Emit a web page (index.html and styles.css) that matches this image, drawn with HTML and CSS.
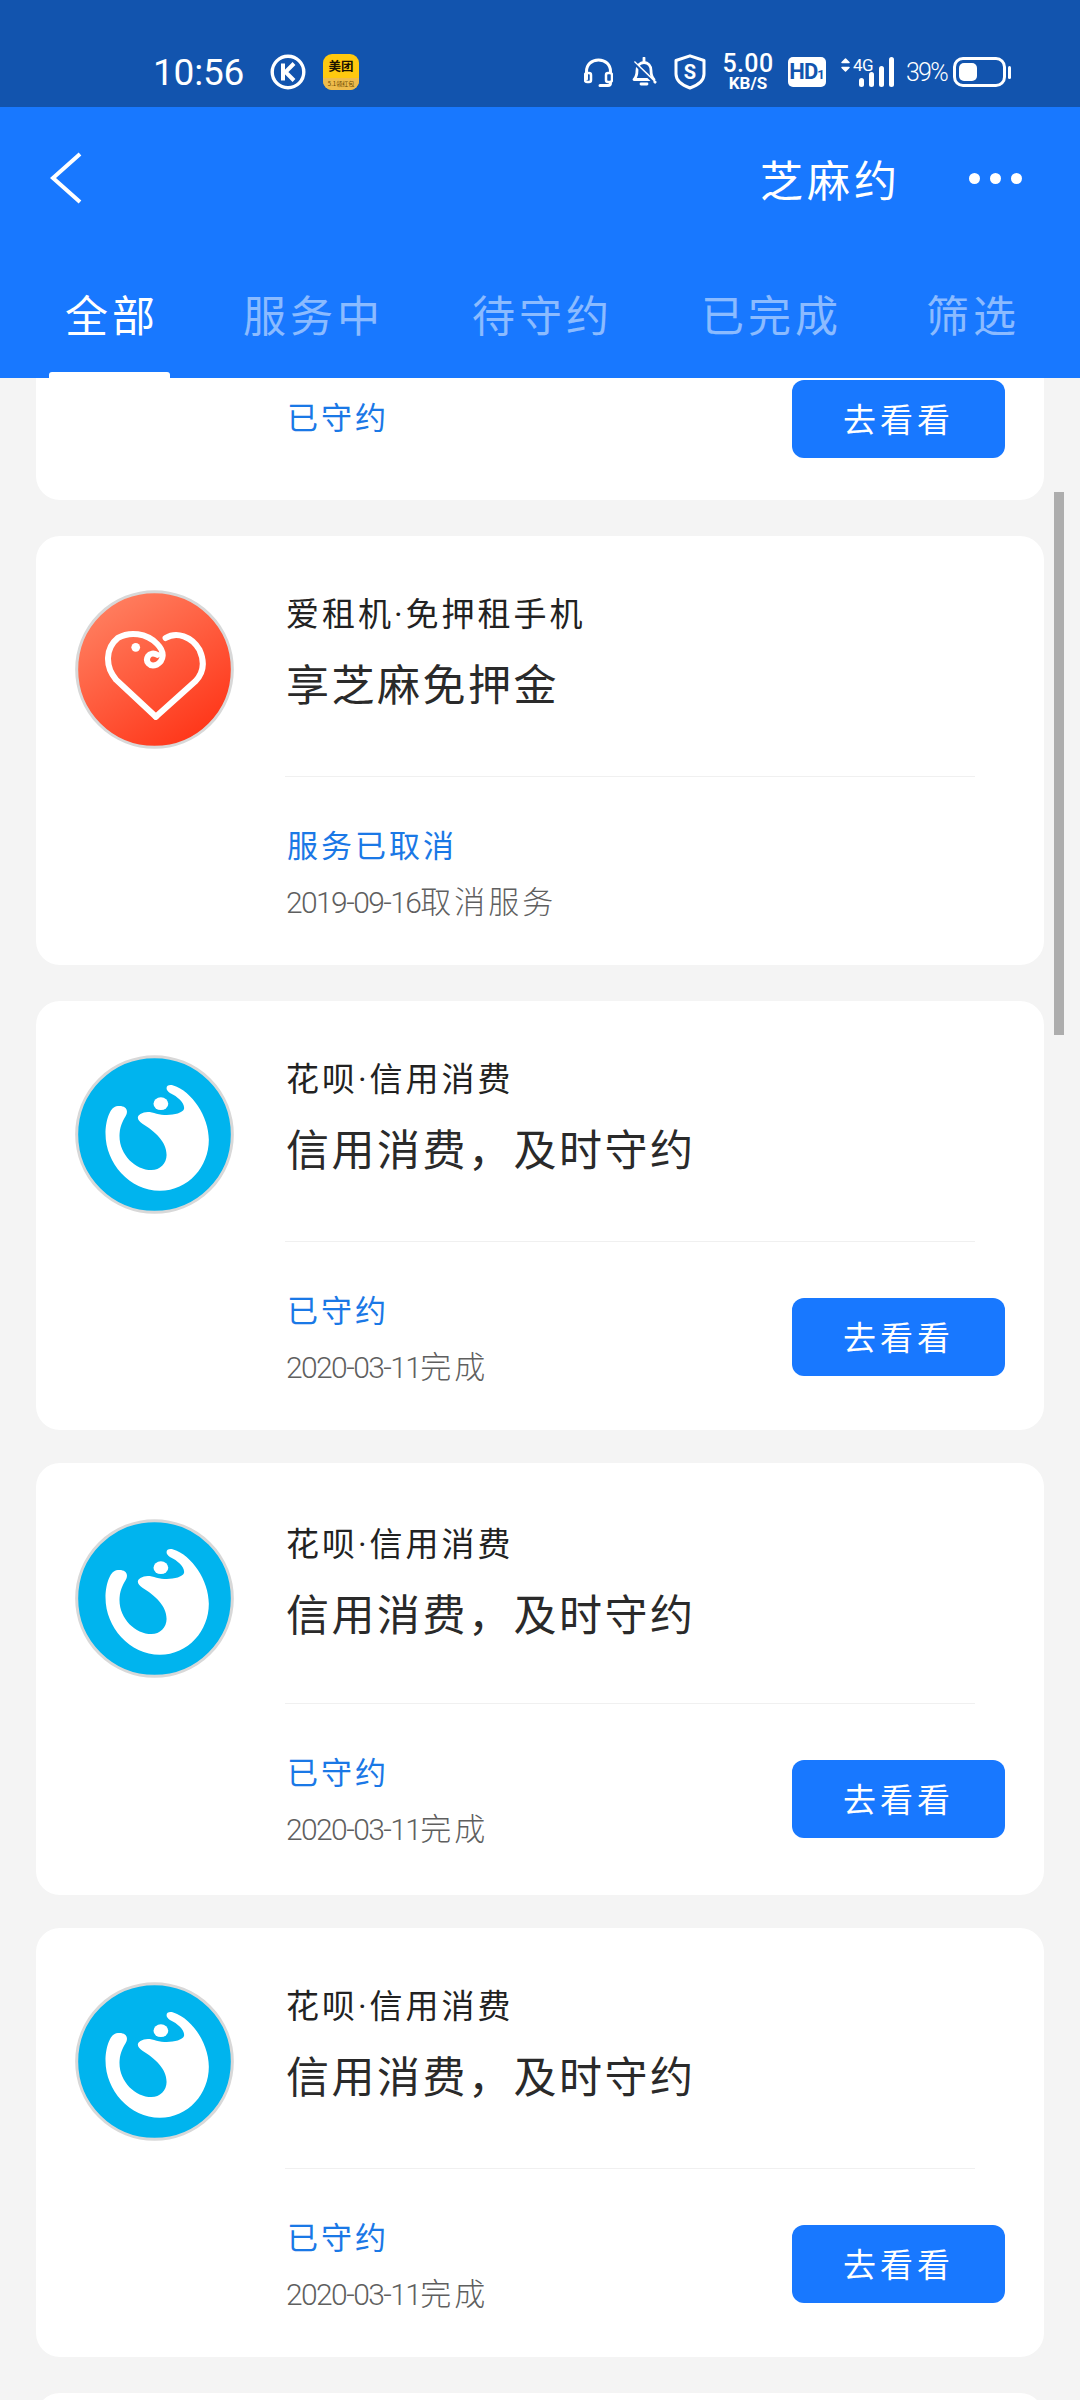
FILE: index.html
```html
<!DOCTYPE html>
<html lang="zh-CN">
<head>
<meta charset="utf-8">
<title>芝麻约</title>
<link rel="stylesheet" href="styles.css">
</head>
<body>
<svg class="defs" width="0" height="0" aria-hidden="true">
  <defs>
    <linearGradient id="heart-bg" x1="0.2" y1="0.05" x2="0.8" y2="0.95">
      <stop offset="0" stop-color="#ff7f60"/>
      <stop offset="1" stop-color="#ff3518"/>
    </linearGradient>
    <symbol id="logo-heart" viewBox="27 27 474 474">
      <circle cx="264" cy="264" r="232" fill="url(#heart-bg)" stroke="#d8d8d8" stroke-width="9"/>
      <g class="soft" fill="none" stroke="#fff" stroke-width="18" stroke-linecap="round" stroke-linejoin="round">
        <path d="M268 405L150 295C115 255 118 200 155 170C190 150 240 155 272 188C296 212 292 238 270 250C250 258 235 240 245 224C250 216 262 214 272 220"/>
        <path d="M297 170C330 150 375 165 398 205C418 250 405 280 385 300L268 405"/>
      </g>
      <circle class="soft" cx="208" cy="198" r="13" fill="#fff"/>
    </symbol>
    <symbol id="logo-drop" viewBox="27 27 474 474">
      <circle cx="264" cy="264" r="232" fill="#00b4ee" stroke="#d8d8d8" stroke-width="9"/>
      <path class="soft" fill="#fff" d="M150 180C130 185 118 225 118 262C118 350 190 432 280 432C365 432 426 360 426 280C426 210 375 135 320 118C300 112 292 128 310 140C335 152 355 170 352 188C345 205 300 210 270 202C250 195 235 195 222 203C208 212 215 222 228 232C265 255 300 285 300 325C300 350 280 370 255 370C205 370 155 320 160 260C162 235 172 220 180 205C188 185 170 175 150 180Z"/>
      <ellipse class="soft" cx="283" cy="172" rx="22" ry="19" fill="#fff"/>
    </symbol>
  </defs>
</svg>

<div class="phone">
  <header class="status">
    <span class="clock">10:56</span>
    <svg class="ic-k" viewBox="0 0 36 36"><circle cx="18" cy="18" r="15.8" fill="none" stroke="#fff" stroke-width="3.4"/><path d="M13 9.5v17M24 9.5L15.5 18L24 26.5" fill="none" stroke="#fff" stroke-width="4"/></svg>
    <div class="mt"><span class="mt-name">美团</span><span class="mt-sub">5.1领红包</span></div>
    <div class="status-right">
      <svg class="ic-head" viewBox="0 0 29 29"><path d="M2.5 21V13.5C2.5 6.5 7.5 2 14.5 2S26.5 6.5 26.5 13.5V25C26.5 26.5 25.5 27.5 24 27.5H16" fill="none" stroke="#fff" stroke-width="3" stroke-linecap="round"/><rect x="1" y="15" width="6" height="9" rx="2" fill="none" stroke="#fff" stroke-width="2.5"/><rect x="22" y="15" width="6" height="9" rx="2" fill="#1254ae" stroke="#fff" stroke-width="2.5"/></svg>
      <svg class="ic-bell" viewBox="0 0 26 30"><path d="M3 22.5C5.5 20 6 18 6 13.5C6 8.5 9 5.5 13 5.5S20 8.5 20 13.5C20 18 20.5 20 23 22.5H3Z" fill="none" stroke="#fff" stroke-width="2.8" stroke-linejoin="round"/><path d="M13 1v4M10 27h6" stroke="#fff" stroke-width="2.8" stroke-linecap="round"/><path d="M3 5L25 26" stroke="#fff" stroke-width="2.5"/><path d="M0 3.5L22 25" stroke="#1254ae" stroke-width="2"/></svg>
      <svg class="ic-shield" viewBox="0 0 32 36"><path d="M16 1.8L30 6.5V20C30 27 23 31.5 16 34C9 31.5 2 27 2 20V6.5Z" fill="none" stroke="#fff" stroke-width="3" stroke-linejoin="round"/><text class="shield-s" x="16" y="25" text-anchor="middle">S</text></svg>
      <div class="speed"><span class="speed-n">5.00</span><span class="speed-u">KB/S</span></div>
      <div class="hd">HD<span class="hd-n">1</span></div>
      <svg class="ic-arrows" viewBox="0 0 9 16"><path d="M1 5.5L4.5 2L8 5.5ZM1 10.5L4.5 14L8 10.5Z" fill="#fff" stroke="#fff" stroke-width="1.5" stroke-linejoin="round"/></svg>
      <div class="net">
        <span class="net-g">4G</span>
        <div class="bars"><i class="b1"></i><i class="b2"></i><i class="b3"></i><i class="b4"></i></div>
      </div>
      <span class="batt-p">39%</span>
      <div class="batt"><div class="batt-fill"></div></div>
      <div class="batt-nub"></div>
    </div>
  </header>

  <section class="appbar">
    <div class="navrow">
      <svg class="back" viewBox="0 0 32 52"><path d="M30 2L3 26L30 50" fill="none" stroke="#fff" stroke-width="4"/></svg>
      <h1 class="title">芝麻约</h1>
      <div class="more"><i></i><i></i><i></i></div>
    </div>
    <nav class="tabs">
      <span class="tab tab--on">全部</span>
      <span class="tab">服务中</span>
      <span class="tab">待守约</span>
      <span class="tab">已完成</span>
      <span class="tab tab--last">筛选</span>
    </nav>
  </section>

  <main class="list">
    <div class="scrollbar"></div>

    <article class="card card--cut">
      <div class="foot">
        <div class="meta"><div class="state">已守约</div></div>
        <button class="go">去看看</button>
      </div>
    </article>

    <article class="card">
      <svg class="logo"><use href="#logo-heart"/></svg>
      <div class="body">
        <div class="name">爱租机·免押租手机</div>
        <div class="head">享芝麻免押金</div>
        <div class="rule"></div>
        <div class="foot">
          <div class="meta"><div class="state">服务已取消</div><div class="date"><span class="num">2019-09-16</span>取消服务</div></div>
        </div>
      </div>
    </article>

    <article class="card">
      <svg class="logo"><use href="#logo-drop"/></svg>
      <div class="body">
        <div class="name">花呗·信用消费</div>
        <div class="head">信用消费，及时守约</div>
        <div class="rule"></div>
        <div class="foot">
          <div class="meta"><div class="state">已守约</div><div class="date"><span class="num">2020-03-11</span>完成</div></div>
          <button class="go">去看看</button>
        </div>
      </div>
    </article>

    <article class="card card--tall">
      <svg class="logo"><use href="#logo-drop"/></svg>
      <div class="body">
        <div class="name">花呗·信用消费</div>
        <div class="head">信用消费，及时守约</div>
        <div class="rule"></div>
        <div class="foot">
          <div class="meta"><div class="state">已守约</div><div class="date"><span class="num">2020-03-11</span>完成</div></div>
          <button class="go">去看看</button>
        </div>
      </div>
    </article>

    <article class="card card--tight">
      <svg class="logo"><use href="#logo-drop"/></svg>
      <div class="body">
        <div class="name">花呗·信用消费</div>
        <div class="head">信用消费，及时守约</div>
        <div class="rule"></div>
        <div class="foot">
          <div class="meta"><div class="state">已守约</div><div class="date"><span class="num">2020-03-11</span>完成</div></div>
          <button class="go">去看看</button>
        </div>
      </div>
    </article>

    <article class="card card--peek"></article>
  </main>
</div>
</body>
</html>
```

FILE: styles.css
```css
* { box-sizing: border-box; }
html, body { margin: 0; padding: 0; }
body { width: 1080px; height: 2400px; overflow: hidden; background: #f4f4f4; font-family: "Noto Sans CJK SC", "Noto Sans", sans-serif; }
.defs { position: absolute; }
.soft { filter: blur(1.5px); }
.phone { width: 1080px; height: 2400px; display: flex; flex-direction: column; overflow: hidden; }

/* status bar */
.status { height: 107px; flex: none; background: #1254ae; color: #fff; display: flex; align-items: center; padding: 37px 0 0 153px; position: relative; }
.clock { font: 400 37px/1 Roboto, sans-serif; width: 89px; letter-spacing: -.2px; }
.ic-k { width: 36px; height: 36px; margin-left: 28px; }
.mt { width: 36px; height: 36px; margin-left: 17px; border-radius: 9px; background: #ffc90f; display: flex; flex-direction: column; align-items: center; overflow: hidden; }
.mt-name { font: 700 12.5px/24px "Noto Sans CJK SC", sans-serif; color: #1a1200; height: 24px; }
.mt-sub { font: 400 6px/12px "Noto Sans CJK SC", sans-serif; color: #6a4a00; background: #efbc4c; width: 100%; height: 12px; text-align: center; white-space: nowrap; }
.status-right { margin-left: 225px; display: flex; align-items: center; height: 36px; }
.ic-head { width: 29px; height: 29px; flex: none; }
.ic-bell { width: 26px; height: 30px; margin-left: 18px; flex: none; }
.ic-shield { width: 32px; height: 36px; margin-left: 17px; flex: none; }
.speed { width: 52px; margin-left: 16px; display: flex; flex-direction: column; align-items: center; font-family: Roboto, sans-serif; flex: none; }
.speed-n { font-size: 25px; line-height: 22px; font-weight: 500; letter-spacing: .4px; }
.speed-u { font-size: 17px; line-height: 17px; font-weight: 700; }
.hd { width: 38px; height: 30px; margin-left: 14px; background: #fff; color: #1254ae; border-radius: 5px; font: 700 22px/30px Roboto, sans-serif; text-align: center; letter-spacing: -1px; flex: none; white-space: nowrap; }
.hd-n { font-size: 13px; letter-spacing: 0; }
.shield-s { font: 700 20px Roboto, sans-serif; fill: #fff; }
.ic-arrows { width: 9px; height: 16px; margin: -14px 0 0 15px; flex: none; }
.net { width: 44px; height: 30px; margin-left: 3px; position: relative; flex: none; }
.net-g { position: absolute; left: 0; top: 0; font: 400 17px/16px Roboto, sans-serif; letter-spacing: -.5px; }
.bars { position: absolute; left: 6px; bottom: 0; display: flex; align-items: flex-end; gap: 5px; }
.bars i { display: block; width: 5px; background: #fff; border-radius: 2.5px; }
.bars .b1 { height: 9px; }
.bars .b2 { height: 15px; }
.bars .b3 { height: 21px; }
.bars .b4 { height: 30px; }
.batt-p { font: 300 25px/1 Roboto, sans-serif; width: 40px; margin-left: 9px; letter-spacing: -1.8px; flex: none; }
.batt { width: 53px; height: 30px; margin-left: 7px; border: 3px solid #fff; border-radius: 10px; padding: 3px; flex: none; }
.batt-fill { width: 18px; height: 18px; background: #fff; border-radius: 5px; }
.batt-nub { width: 3px; height: 13px; margin-left: 2px; background: #fff; border-radius: 2px; flex: none; }

/* app bar */
.appbar { height: 271px; flex: none; background: #1878ff; color: #fff; position: relative; z-index: 2; }
.navrow { height: 178px; padding: 0 58px 0 50px; display: flex; align-items: flex-start; }
.back { width: 32px; height: 52px; margin-top: 45px; flex: none; }
.title { margin: 43px 0 0 auto; font-size: 43px; line-height: 56px; font-weight: 400; letter-spacing: 4px; }
.more { display: flex; gap: 10px; margin: 66px 0 0 68px; }
.more i { display: block; width: 11px; height: 11px; border-radius: 50%; background: #fff; }
.tabs { display: flex; gap: 88px; padding-left: 65px; }
.tab { position: relative; font-size: 43px; line-height: 56px; letter-spacing: 4px; color: rgba(255,255,255,.5); white-space: nowrap; }
.tab--on { color: #fff; margin-right: -4px; }
.tab--last { margin-left: -4px; }
.tab--on::after { content: ""; position: absolute; left: -16px; right: -11px; top: 87px; height: 6px; background: #fff; border-radius: 3px 3px 0 0; }

/* list */
.list { flex: 1; position: relative; padding: 0 36px; display: flex; flex-direction: column; gap: 36px; min-height: 0; }
.scrollbar { position: absolute; left: 1054px; top: 114px; width: 10px; height: 543px; background: #adadad; }
.card { flex: none; background: #fff; border-radius: 24px; height: 429px; padding: 54px 39px 0 39px; display: flex; align-items: flex-start; gap: 52px; }
.card--tall { height: 432px; margin-top: -3px; padding-top: 56px; }
.card--tall .body { margin-top: -53px; }
.card--tall .rule { margin-top: 61px; }
.card--tight { margin-top: -3px; }
.card--cut { height: 122px; border-radius: 0 0 24px 24px; padding: 0 39px 0 250px; display: block; }
.card--cut .foot { height: 122px; }
.card--cut .meta { padding-top: 18px; }
.card--cut .go { margin-top: 2px; }
.card--peek { height: 40px; }
.logo { width: 159px; height: 159px; flex: none; display: block; }
.body { flex: 1; min-width: 0; margin-top: -54px; }
.name { margin-top: 56px; font-family: Roboto, "Noto Sans CJK SC", sans-serif; font-size: 33px; line-height: 46px; color: #222; letter-spacing: 3px; white-space: nowrap; }
.head { margin-top: 14px; font-size: 43px; line-height: 60px; color: #2a2a2a; letter-spacing: 2.5px; white-space: nowrap; }
.rule { height: 1px; margin: 64px 30px 0 -1px; background: #f0f0f0; }
.foot { display: flex; justify-content: space-between; align-items: flex-start; }
.meta { padding-top: 47px; }
.state { margin-left: 1px; font-size: 31px; line-height: 40px; color: #1a78e6; letter-spacing: 3px; white-space: nowrap; }
.date { margin-top: 16px; font-size: 31px; line-height: 40px; font-weight: 300; color: #5f5f5f; letter-spacing: 3px; white-space: nowrap; }
.num { font-family: Roboto, sans-serif; font-size: 30px; letter-spacing: -1.6px; }
.go { width: 213px; height: 78px; margin: 56px 0 0; border: 0; border-radius: 12px; background: #1878ff; color: #fff; font-family: inherit; font-size: 33px; letter-spacing: 4px; padding: 0 0 3px; }
```
